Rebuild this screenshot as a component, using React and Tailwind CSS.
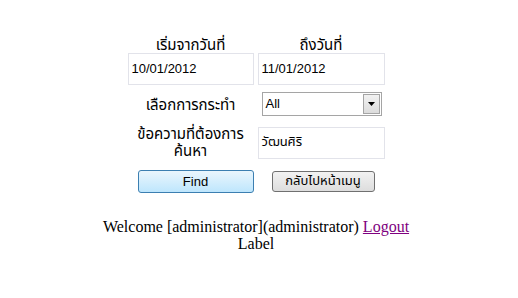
export default function App() {
  const thai = { fontFamily: '"Noto Sans Thai", "Tahoma", "Liberation Sans", "Noto Sans", sans-serif' };
  const sans = { fontFamily: '"Liberation Sans", sans-serif' };
  return (
    <div className="w-[518px] h-[298px] bg-white flex flex-col items-center pt-[38px] pr-[6px]" style={sans}>
      <div className="grid grid-cols-[126px_127px] gap-x-[4px] text-[15px] text-black" style={thai}>
        <div className="text-center h-[15px] leading-[15px]">เริ่มจากวันที่</div>
        <div className="text-center h-[15px] leading-[15px]">ถึงวันที่</div>
        <div className="h-[32px] border border-[#e2e3ea] flex items-center px-[3px] text-[13px]" style={sans}>10/01/2012</div>
        <div className="h-[32px] border border-[#e2e3ea] flex items-center px-[3px] text-[13px]" style={sans}>11/01/2012</div>
        <div className="h-[42px] flex items-center justify-center pt-[1px]">เลือกการกระทำ</div>
        <div className="h-[42px] flex items-start pt-[7px] pl-[4px]">
          <div className="w-[120px] h-[24px] border border-[#a5a5a5] flex items-center justify-between text-[13px]" style={sans}>
            <span className="pl-[3px]">All</span>
            <span className="w-[17px] h-[20px] mr-[1px] border border-[#a5a5a5] bg-gradient-to-b from-[#f2f2f2] to-[#dcdcdc] flex items-center justify-center">
              <svg width="7" height="4" viewBox="0 0 7 4"><path d="M0 0h7L3.5 4z" fill="#000" /></svg>
            </span>
          </div>
        </div>
        <div className="h-[32px] flex flex-col items-center justify-center leading-[17px]">
          <span className="leading-[16px]">ข้อความที่ต้องการ</span>
          <span className="leading-[16px] pt-[1px]">ค้นหา</span>
        </div>
        <div className="h-[32px] border border-[#e2e3ea] flex items-center px-[3px] text-[13px]">วัฒนศิริ</div>
        <div className="h-[34px] flex items-start justify-end pt-[11px]">
          <button className="w-[116px] h-[23px] rounded-[3px] border border-[#3c7fb1] bg-gradient-to-b from-[#eaf6fd] to-[#bee6fd] text-[13px] text-black" style={sans}>Find</button>
        </div>
        <div className="h-[34px] flex items-start pt-[12px] pl-[14px]">
          <button className="w-[103px] h-[21px] rounded-[3px] border border-[#707070] bg-gradient-to-b from-[#f2f2f2] to-[#dddddd] text-[13px] text-black" style={thai}>กลับไปหน้าเมนู</button>
        </div>
      </div>
      <div className="mt-[25px] text-center text-[16px] leading-[17px] text-black" style={{ fontFamily: '"Liberation Serif", serif' }}>
        <div>Welcome [administrator](administrator) <a href="#" className="text-[#800080] underline">Logout</a></div>
        <div>Label</div>
      </div>
    </div>
  );
}
